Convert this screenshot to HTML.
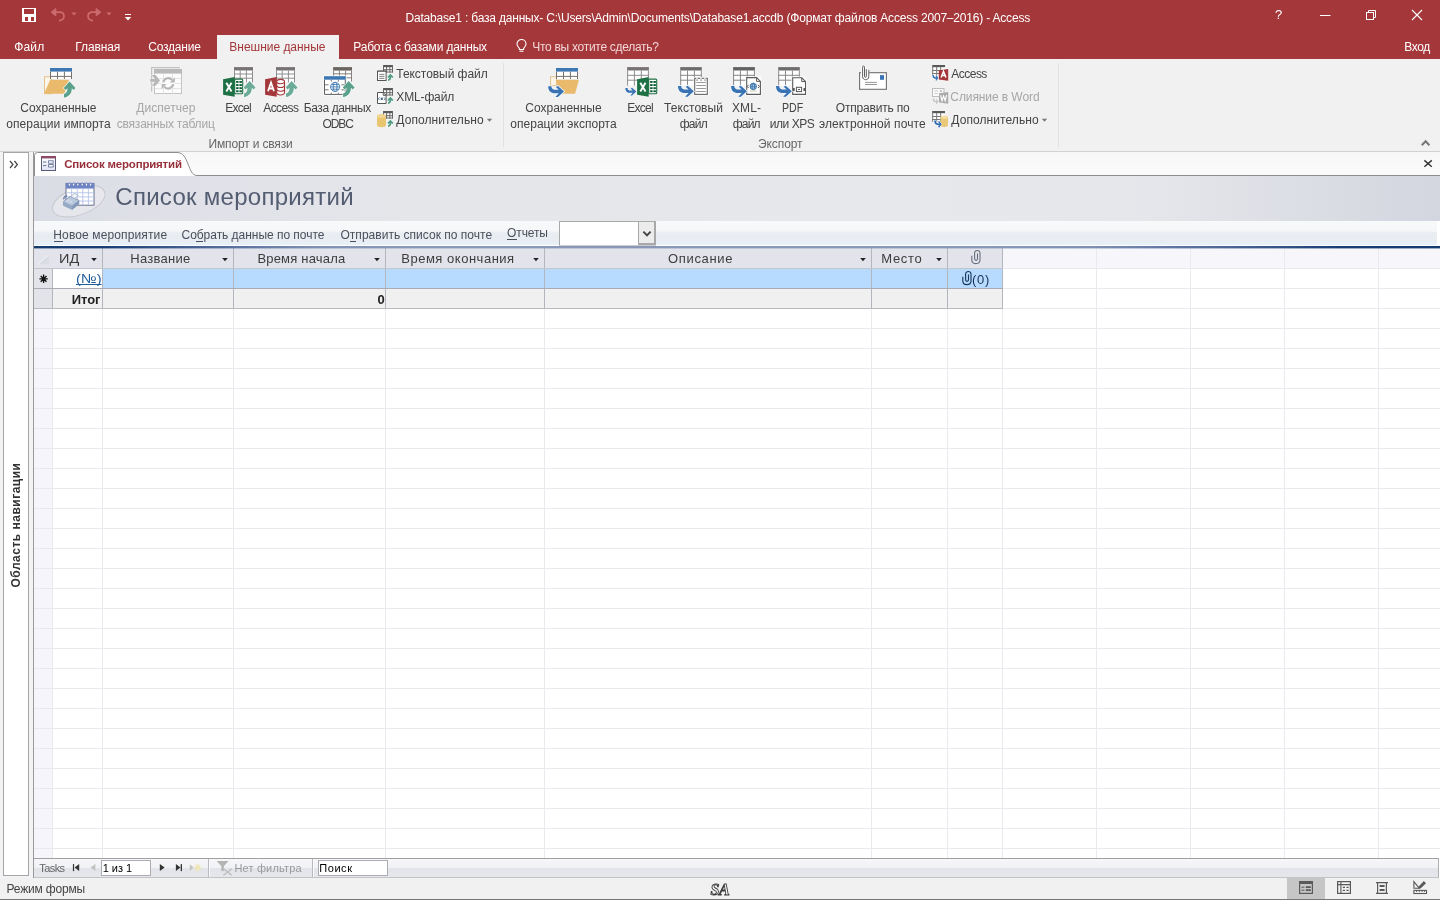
<!DOCTYPE html>
<html lang="ru">
<head>
<meta charset="utf-8">
<title>Database1 : база данных - Access</title>
<style>
*{box-sizing:border-box;margin:0;padding:0}
html,body{width:1440px;height:900px;overflow:hidden;background:#fff}
body{font-family:"Liberation Sans",sans-serif;font-size:12px;color:#444;position:relative}
#app{position:absolute;left:0;top:0;width:1440px;height:900px;will-change:transform}
.t{position:absolute;white-space:pre;line-height:20px;height:20px}
.a{position:absolute}
svg{position:absolute;overflow:visible}
#titlebar{left:0;top:0;width:1440px;height:59px;background:#a4373a}
#acttab{left:217px;top:35px;width:122px;height:24px;background:#f1f1f1}
#ribbon{left:0;top:59px;width:1440px;height:93px;background:#f1f1f1;border-bottom:1px solid #d2d2d2}
.sep{position:absolute;top:63px;width:1px;height:84px;background:#e2e2e2}
#work{left:0;top:152px;width:1440px;height:726px;background:#f3f3f5}
#nav{left:3px;top:152px;width:26px;height:724px;background:#fff;border:1px solid #a6a6a6}
#navtxt{left:-46px;top:515.5px;letter-spacing:0.5px;width:123px;height:20px;transform:rotate(-90deg);transform-origin:center;font-weight:700;font-size:12px;color:#333;white-space:pre;line-height:20px;text-align:center}
#doc{left:33px;top:152px;width:1407px;height:726px;background:#fff;border-left:1px solid #9a9a9a}
#tabrow{left:34px;top:152px;width:1406px;height:24px;background:linear-gradient(#f7f7f7,#fbfbfb)}
#fhead{left:34px;top:176px;width:1406px;height:45px;background:linear-gradient(90deg,#dadce5 0%,#e0e1e8 10%,#e5e6ea 26%,#e7e8eb 60%,#e6e7eb 78%,#dcdee5 90%,#d3d6df 100%)}
#abar{left:34px;top:221px;width:1403px;height:25px;background:linear-gradient(#f8f9fa 0%,#f5f7f9 40%,#e9ecf1 48%,#e8edf3 80%,#e6f0f8 94%,#fff 98%)}
#bline{left:34px;top:246px;width:1406px;height:2px;background:linear-gradient(90deg,#143c6e 0%,#173f73 5%,#4a6596 12%,#8090b4 20%,#8b97b9 26%,#8b97b9 68%,#8090b4 75%,#4a6596 85%,#173f73 93%,#143c6e 100%)}
#bline2{left:34px;top:248px;width:1406px;height:1px;opacity:.4;z-index:3;background:linear-gradient(90deg,#143c6e 0%,#173f73 5%,#4a6596 12%,#8090b4 20%,#8b97b9 26%,#8b97b9 68%,#8090b4 75%,#4a6596 85%,#173f73 93%,#143c6e 100%)}
#chead{left:34px;top:248px;width:968px;height:20px;background:#e3e4eb}
#cheadx{left:1003px;top:248px;width:437px;height:20px;background:#f6f6fb}
#selcol{left:34px;top:308px;width:18px;height:550px;background:#f5f5fb}
#newrow{left:103px;top:269px;width:899px;height:19px;background:#b7dbff}
#totrow{left:34px;top:289px;width:968px;height:19px;background:#f0f0f0}
.vl{position:absolute;width:1px}
.hl{position:absolute;height:1px}
#navbar{left:34px;top:858px;width:1405px;height:20px;border-right:1px solid #b0b0b0;background:linear-gradient(#f6f6f9 0%,#f1f2f5 48%,#e3e4e9 52%,#e6e7ec 100%);border-top:1px solid #a0a0a0;border-bottom:1px solid #c4c4c4}
.box{position:absolute;background:#fff;border:1px solid #abadb3}
#status{left:0;top:878px;width:1440px;height:22px;background:#f1f1f1;border-bottom:1px solid #777}
#vsel{left:1287px;top:878px;width:38px;height:21px;background:#c6c6c6}
</style>
</head>
<body>
<div id="app">
<div class="a" id="titlebar"></div><div class="a" id="acttab"></div>
<span class="t" style="left:405.5px;top:7.5px;font-size:12px;color:#fff;letter-spacing:-0.193px;">Database1 : база данных- C:\Users\Admin\Documents\Database1.accdb (Формат файлов Access 2007–2016) - Access</span>
<span class="t" style="left:14.3px;top:37.0px;font-size:12px;color:#fff;letter-spacing:0.133px;">Файл</span>
<span class="t" style="left:75.3px;top:37.0px;font-size:12px;color:#fff;letter-spacing:-0.1px;">Главная</span>
<span class="t" style="left:148.2px;top:37.0px;font-size:12px;color:#fff;letter-spacing:-0.2px;">Создание</span>
<span class="t" style="left:229.3px;top:37.0px;font-size:12px;color:#a4373a;letter-spacing:-0.023px;">Внешние данные</span>
<span class="t" style="left:353.2px;top:37.0px;font-size:12px;color:#fff;letter-spacing:-0.167px;">Работа с базами данных</span>
<span class="t" style="left:532.3px;top:37.0px;font-size:12px;color:#f3d6d7;letter-spacing:-0.286px;">Что вы хотите сделать?</span>
<span class="t" style="left:1404.3px;top:37.0px;font-size:12px;color:#fff;letter-spacing:-0.433px;">Вход</span>
<div class="a" id="ribbon"></div>
<div class="sep" style="left:503px"></div><div class="sep" style="left:1058px"></div>
<span class="t" style="left:20.3px;top:98.0px;font-size:12px;color:#444;letter-spacing:-0.03px;">Сохраненные</span>
<span class="t" style="left:6.3px;top:114.0px;font-size:12px;color:#444;letter-spacing:0.067px;">операции импорта</span>
<span class="t" style="left:136.3px;top:98.0px;font-size:12px;color:#a6a6a6;letter-spacing:0.05px;">Диспетчер</span>
<span class="t" style="left:116.7px;top:114.0px;font-size:12px;color:#a6a6a6;letter-spacing:-0.2px;">связанных таблиц</span>
<span class="t" style="left:225.3px;top:98.0px;font-size:12px;color:#444;letter-spacing:-0.75px;">Excel</span>
<span class="t" style="left:263.3px;top:98.0px;font-size:12px;color:#444;letter-spacing:-0.6px;">Access</span>
<span class="t" style="left:303.7px;top:98.0px;font-size:12px;color:#444;letter-spacing:-0.39px;">База данных</span>
<span class="t" style="left:322.5px;top:114.0px;font-size:12px;color:#444;letter-spacing:-1.067px;">ODBC</span>
<span class="t" style="left:396.3px;top:64.0px;font-size:12px;color:#444;letter-spacing:-0.046px;">Текстовый файл</span>
<span class="t" style="left:396.3px;top:87.0px;font-size:12px;color:#444;letter-spacing:-0.143px;">XML-файл</span>
<span class="t" style="left:396.3px;top:110.0px;font-size:12px;color:#444;letter-spacing:0.083px;">Дополнительно</span>
<span class="t" style="left:208.5px;top:133.5px;font-size:12px;color:#666;letter-spacing:-0.154px;">Импорт и связи</span>
<span class="t" style="left:525.3px;top:98.0px;font-size:12px;color:#444;letter-spacing:-0.01px;">Сохраненные</span>
<span class="t" style="left:510.3px;top:114.0px;font-size:12px;color:#444;letter-spacing:0.025px;">операции экспорта</span>
<span class="t" style="left:627.3px;top:98.0px;font-size:12px;color:#444;letter-spacing:-0.75px;">Excel</span>
<span class="t" style="left:664.0px;top:98.0px;font-size:12px;color:#444;letter-spacing:0.062px;">Текстовый</span>
<span class="t" style="left:679.7px;top:114.0px;font-size:12px;color:#444;letter-spacing:-0.733px;">файл</span>
<span class="t" style="left:732.0px;top:98.0px;font-size:12px;color:#444;letter-spacing:0.1px;">XML-</span>
<span class="t" style="left:732.8px;top:114.0px;font-size:12px;color:#444;letter-spacing:-0.833px;">файл</span>
<span class="t" style="left:781.6px;top:98.0px;font-size:12px;color:#444;transform:scaleX(0.883);transform-origin:0 0;">PDF</span>
<span class="t" style="left:769.8px;top:114.0px;font-size:12px;color:#444;letter-spacing:-0.467px;">или XPS</span>
<span class="t" style="left:835.8px;top:98.0px;font-size:12px;color:#444;letter-spacing:-0.191px;">Отправить по</span>
<span class="t" style="left:819.0px;top:114.0px;font-size:12px;color:#444;letter-spacing:0.112px;">электронной почте</span>
<span class="t" style="left:951.3px;top:64.0px;font-size:12px;color:#444;letter-spacing:-0.52px;">Access</span>
<span class="t" style="left:950.3px;top:87.0px;font-size:12px;color:#a6a6a6;letter-spacing:-0.085px;">Слияние в Word</span>
<span class="t" style="left:951.3px;top:110.0px;font-size:12px;color:#444;letter-spacing:0.083px;">Дополнительно</span>
<span class="t" style="left:758.0px;top:133.5px;font-size:12px;color:#666;letter-spacing:-0.083px;">Экспорт</span>
<svg style="left:22px;top:8px" width="14" height="14" viewBox="0 0 14 14"><rect width="14" height="14" fill="#fff"/><rect x="2" y="1" width="10" height="5" fill="#a4373a"/><rect x="3" y="9" width="3" height="4" fill="#a4373a"/><rect x="9" y="9" width="3" height="4" fill="#a4373a"/></svg><svg style="left:50px;top:7px" width="17" height="16" viewBox="0 0 17 16"><path d="M2.2 5.2H9.5C12.5 5.2 14 7 14 9.2C14 11.6 12.2 13 9.6 13.6" fill="none" stroke="#cc6b6f" stroke-width="1.7" stroke-linecap="round"/><path d="M5.8 1.4L1.2 5.2L5.8 9Z" fill="#cc6b6f" stroke="#cc6b6f" stroke-width="1" stroke-linejoin="round"/></svg><svg style="left:85px;top:7px" width="17" height="16" viewBox="0 0 17 16"><path d="M14.8 5.2H7.5C4.5 5.2 3 7 3 9.2C3 11.6 4.8 13 7.4 13.6" fill="none" stroke="#cc6b6f" stroke-width="1.7" stroke-linecap="round"/><path d="M11.2 1.4L15.8 5.2L11.2 9Z" fill="#cc6b6f" stroke="#cc6b6f" stroke-width="1" stroke-linejoin="round"/></svg><svg style="left:71px;top:12px" width="6" height="4" viewBox="0 0 6 4"><path d="M0.5 0.5H5.5L3 3.5Z" fill="#cc6b6f"/></svg><svg style="left:106px;top:12px" width="6" height="4" viewBox="0 0 6 4"><path d="M0.5 0.5H5.5L3 3.5Z" fill="#cc6b6f"/></svg><svg style="left:124px;top:13px" width="8" height="8" viewBox="0 0 8 8"><rect x="1" y="1" width="6" height="1" fill="#fff"/><path d="M0.8 4H7.2L4 7.5Z" fill="#fff"/></svg><svg style="left:515px;top:38px" width="13" height="16" viewBox="0 0 13 16"><path d="M6.5 1.5C3.9 1.5 2 3.5 2 5.9C2 7.6 3 8.6 3.8 9.6C4.3 10.2 4.5 10.8 4.5 11.5H8.5C8.5 10.8 8.7 10.2 9.2 9.6C10 8.6 11 7.6 11 5.9C11 3.5 9.1 1.5 6.5 1.5Z" fill="none" stroke="#fff" stroke-width="1.1"/><path d="M4.5 13.2H8.5" stroke="#fff" stroke-width="1.1"/></svg><span class="t" style="left:1275px;top:5px;font-size:13px;color:#fff;">?</span><svg style="left:1320px;top:10px" width="11" height="11" viewBox="0 0 11 11"><rect x="0" y="5" width="10.5" height="1" fill="#fff"/></svg><svg style="left:1365px;top:9px" width="12" height="12" viewBox="0 0 12 12"><path d="M3.5 3.5V1.5H10.5V8.5H8.5" fill="none" stroke="#fff" stroke-width="1"/><rect x="1.5" y="3.5" width="7" height="7" fill="none" stroke="#fff" stroke-width="1"/></svg><svg style="left:1411px;top:9px" width="12" height="12" viewBox="0 0 12 12"><path d="M1 1L11 11M11 1L1 11" stroke="#fff" stroke-width="1.1"/></svg>
<svg style="left:43px;top:66px" width="34" height="32" viewBox="0 0 34 32"><rect x="1.5" y="10.7" width="7" height="17" fill="#fdf5e8" stroke="#e4c391" stroke-width="1"/><rect x="7" y="2" width="22" height="11" fill="#fff"/><rect x="7" y="2" width="22" height="3.6" fill="#3e78b4"/><path d="M7.5 5.6V13M28.5 5.6V13M14.5 5.6V13M21.4 5.6V13M7 10.4H29" stroke="#77716c" stroke-width="1" fill="none"/><path d="M7.2 13.8H25.9L21.4 27.8H1Z" fill="#e9ba6c"/><path transform="translate(21 15.6)" d="M5.6 0L11.5 6.4L9.6 8.4L7.8 6.6C7.9 11.6 5 15.2 0 15.9L0 12.3C2.7 11.7 3.5 9.6 3.4 6.6L1.6 8.4L-0.3 6.4Z" fill="#5aa08b" stroke="#f4fbf8" stroke-width="1.2" paint-order="stroke"/></svg><svg style="left:150px;top:66px" width="33" height="30" viewBox="0 0 33 30"><path d="M1.6 25.6V1.6H29.8" fill="none" stroke="#c2c2c2" stroke-width="1.2"/><rect x="4.5" y="3.5" width="27" height="24" fill="#fcfcfc" stroke="#c4c4c4" stroke-width="1"/><rect x="4" y="3.1" width="27.9" height="4.5" fill="#bab8ba"/><path d="M5 12.6H31M5 17.6H31M5 22.6H31M13.5 8V27.5M22.5 8V27.5" stroke="#e3e3e3" stroke-width="1"/><path d="M1.8 9L5.6 9L10 14.4L5.6 19.8H1.8L5 15.8H0.2V13H5Z" fill="#b7b7b7" stroke="#f5f5f5" stroke-width="1" paint-order="stroke"/><circle cx="18.2" cy="17.3" r="6.6" fill="#fcfcfc"/><path d="M13.2 16.4A5.1 5.1 0 0 1 22.2 14" fill="none" stroke="#b7b7b7" stroke-width="2.2"/><path d="M24.8 11.6V16.6H19.8Z" fill="#b7b7b7"/><path d="M23.2 18.2A5.1 5.1 0 0 1 14.2 20.6" fill="none" stroke="#b7b7b7" stroke-width="2.2"/><path d="M11.6 23V18H16.6Z" fill="#b7b7b7"/></svg><svg style="left:222px;top:66px" width="34" height="32" viewBox="0 0 34 32"><rect x="12" y="1.1" width="19" height="15.299999999999999" fill="#fff"/><rect x="12" y="1.1" width="19" height="3.4" fill="#777374"/><path d="M12.5 4.5V16.4M30.5 4.5V16.4M18.2 4.5V16.4M24.4 4.5V16.4M12 8H31M12 12.2H31" stroke="#8e8c8c" stroke-width="1" fill="none"/><rect x="12.7" y="13.1" width="8" height="14.7" rx="1" fill="#fff" stroke="#1e7145" stroke-width="1.1"/><rect x="14.1" y="15.0" width="2.5" height="1.9" fill="#0f5e35"/><rect x="17.4" y="15.0" width="2.5" height="1.9" fill="#0f5e35"/><rect x="14.1" y="18.1" width="2.5" height="1.9" fill="#0f5e35"/><rect x="17.4" y="18.1" width="2.5" height="1.9" fill="#0f5e35"/><rect x="14.1" y="21.2" width="2.5" height="1.9" fill="#0f5e35"/><rect x="17.4" y="21.2" width="2.5" height="1.9" fill="#0f5e35"/><rect x="14.1" y="24.3" width="2.5" height="1.9" fill="#0f5e35"/><rect x="17.4" y="24.3" width="2.5" height="1.9" fill="#0f5e35"/><path d="M1.1 13.3L12.7 11.1V30.700000000000003L1.1 28.700000000000003Z" fill="#1e7145"/><path d="M4.300000000000001 16.7L9.5 25.5M9.5 16.7L4.300000000000001 25.5" stroke="#fff" stroke-width="1.9"/><path transform="translate(22 15.1)" d="M5.6 0L11.5 6.4L9.6 8.4L7.8 6.6C7.9 11.6 5 15.2 0 15.9L0 12.3C2.7 11.7 3.5 9.6 3.4 6.6L1.6 8.4L-0.3 6.4Z" fill="#6dab99" stroke="#f4fbf8" stroke-width="1.2" paint-order="stroke"/></svg><svg style="left:264px;top:66px" width="34" height="32" viewBox="0 0 34 32"><rect x="12" y="1.1" width="19" height="15.299999999999999" fill="#fff"/><rect x="12" y="1.1" width="19" height="3.4" fill="#777374"/><path d="M12.5 4.5V16.4M30.5 4.5V16.4M18.2 4.5V16.4M24.4 4.5V16.4M12 8H31M12 12.2H31" stroke="#8e8c8c" stroke-width="1" fill="none"/><path d="M12.7 15.6V26.6C12.7 29.700000000000003 20.5 29.700000000000003 20.5 26.6V15.6" fill="#fff" stroke="#a4373a" stroke-width="1.1"/><ellipse cx="16.6" cy="15.6" rx="3.9" ry="2.2" fill="#fff" stroke="#a4373a" stroke-width="1.1"/><path d="M12.7 19.299999999999997C12.7 22.299999999999997 20.5 22.299999999999997 20.5 19.299999999999997" fill="none" stroke="#a4373a" stroke-width="1.1"/><path d="M12.7 23.0C12.7 26.0 20.5 26.0 20.5 23.0" fill="none" stroke="#a4373a" stroke-width="1.1"/><path d="M1.1 13.3L12.7 11.1V30.700000000000003L1.1 28.700000000000003Z" fill="#a4373a"/><path d="M4.0 25.299999999999997L7.0 16.5L10.0 25.299999999999997M5.1 22.5H8.9" stroke="#fff" stroke-width="1.8" fill="none"/><path transform="translate(22 15.1)" d="M5.6 0L11.5 6.4L9.6 8.4L7.8 6.6C7.9 11.6 5 15.2 0 15.9L0 12.3C2.7 11.7 3.5 9.6 3.4 6.6L1.6 8.4L-0.3 6.4Z" fill="#6dab99" stroke="#f4fbf8" stroke-width="1.2" paint-order="stroke"/></svg><svg style="left:323px;top:66px" width="34" height="32" viewBox="0 0 34 32"><rect x="10.1" y="1.1" width="18.9" height="14.5" fill="#fff"/><rect x="10.1" y="1.1" width="18.9" height="3.5" fill="#6a6560"/><path d="M10.6 4.6V15.6M28.5 4.6V15.6M16.4 4.6V15.6M22.6 4.6V15.6M10.1 7.8H29M10.1 11.8H29" stroke="#85817c" stroke-width="1" fill="none"/><rect x="0.3" y="9.5" width="23.2" height="20.1" fill="#f8fbfe"/><rect x="1" y="10.2" width="21.8" height="18.7" fill="#fff"/><rect x="1" y="10.2" width="21.8" height="3.5" fill="#3e78b4"/><path d="M1.5 13.7V28.4H22.3V13.7" fill="none" stroke="#5f5f5f" stroke-width="1"/><path d="M8.3 13.7V15.6M15.3 13.7V15.6M8.3 26.6V28.4M15.3 26.6V28.4M2 18.8H5.6M2 23.8H5.6M18.4 18.8H22M18.4 23.8H22" stroke="#7a7a7a" stroke-width="1"/><circle cx="12.1" cy="20.9" r="4.6" fill="#fff" stroke="#3f78b0" stroke-width="0.9"/><ellipse cx="12.1" cy="20.9" rx="1.9319999999999997" ry="4.6" fill="none" stroke="#3f78b0" stroke-width="0.9"/><path d="M7.5 20.9H16.7M8.19 18.599999999999998H16.009999999999998M8.19 23.2H16.009999999999998" stroke="#3f78b0" stroke-width="0.9"/><path transform="translate(20.1 15.1)" d="M5.6 0L11.5 6.4L9.6 8.4L7.8 6.6C7.9 11.6 5 15.2 0 15.9L0 12.3C2.7 11.7 3.5 9.6 3.4 6.6L1.6 8.4L-0.3 6.4Z" fill="#5aa08b" stroke="#f4fbf8" stroke-width="1.2" paint-order="stroke"/></svg><svg style="left:377px;top:65px" width="17" height="17" viewBox="0 0 17 17"><rect x="6" y="0" width="10" height="7.5" fill="#fff"/><rect x="6" y="0" width="10" height="2.2" fill="#595959"/><path d="M6.5 0V7.5M15.5 0V7.5M6 7.0H16M6 4.7H16M9.6 2V7.5M12.9 2V7.5" stroke="#666" stroke-width="1" fill="none"/><rect x="0.5" y="6.1" width="8.6" height="9.4" fill="#fff" stroke="#555" stroke-width="1"/><path d="M2 5.2V7M4 5.2V7M6 5.2V7M8 5.2V7" stroke="#555" stroke-width=".9"/><path d="M2.2 9.4H7.4M2.2 11.4H7.4M2.2 13.4H7.4" stroke="#777" stroke-width=".9"/><path transform="translate(10.6 8.7)" d="M2.8 0L5.9 3.4L4.7 4.4L3.7 3.4C3.8 5.6 2.6 7 0.4 7.3L0.4 5.6C1.6 5.3 1.9 4.5 1.9 3.4L0.9 4.4L-0.3 3.4Z" fill="#4f9a84" stroke="#f4fbf8" stroke-width=".8" paint-order="stroke"/></svg><svg style="left:377px;top:88px" width="17" height="17" viewBox="0 0 17 17"><rect x="6" y="0" width="10" height="7.5" fill="#fff"/><rect x="6" y="0" width="10" height="2.2" fill="#595959"/><path d="M6.5 0V7.5M15.5 0V7.5M6 7.0H16M6 4.7H16M9.6 2V7.5M12.9 2V7.5" stroke="#666" stroke-width="1" fill="none"/><path d="M0.5 4.5H6.2L9.1 7.4V15.5H0.5Z" fill="#fff" stroke="#555" stroke-width="1"/><path d="M6.2 4.5V7.4H9.1" fill="none" stroke="#555" stroke-width=".9"/><path d="M2.6 9.4L1.4 10.8L2.6 12.2M7 9.4L8.2 10.8L7 12.2" fill="none" stroke="#4a6a8c" stroke-width=".9"/><rect x="3.7" y="9.7" width="2.2" height="2.2" fill="#4a6a8c"/><path transform="translate(10.6 8.7)" d="M2.8 0L5.9 3.4L4.7 4.4L3.7 3.4C3.8 5.6 2.6 7 0.4 7.3L0.4 5.6C1.6 5.3 1.9 4.5 1.9 3.4L0.9 4.4L-0.3 3.4Z" fill="#4f9a84" stroke="#f4fbf8" stroke-width=".8" paint-order="stroke"/></svg><svg style="left:377px;top:111px" width="17" height="17" viewBox="0 0 17 17"><rect x="6" y="0" width="10" height="7.5" fill="#fff"/><rect x="6" y="0" width="10" height="2.2" fill="#595959"/><path d="M6.5 0V7.5M15.5 0V7.5M6 7.0H16M6 4.7H16M9.6 2V7.5M12.9 2V7.5" stroke="#666" stroke-width="1" fill="none"/><path d="M0 5V14C0 17 9 17 9 14V5Z" fill="#e8c56e"/><ellipse cx="4.5" cy="5" rx="4.5" ry="2" fill="#f0d58e"/><path transform="translate(10.6 8.7)" d="M2.8 0L5.9 3.4L4.7 4.4L3.7 3.4C3.8 5.6 2.6 7 0.4 7.3L0.4 5.6C1.6 5.3 1.9 4.5 1.9 3.4L0.9 4.4L-0.3 3.4Z" fill="#4f9a84" stroke="#f4fbf8" stroke-width=".8" paint-order="stroke"/></svg><svg style="left:547px;top:66px" width="34" height="32" viewBox="0 0 34 32"><rect x="3.5" y="10.7" width="6" height="9" fill="#fdf5e8" stroke="#e4c391" stroke-width="1"/><rect x="9" y="2" width="22" height="11" fill="#fff"/><rect x="9" y="2" width="22" height="3.6" fill="#3e78b4"/><path d="M9.5 5.6V13M30.5 5.6V13M16.5 5.6V13M23.4 5.6V13M9 10.4H31" stroke="#77716c" stroke-width="1" fill="none"/><path d="M8.6 13.8H31.9L28.1 27.8H12.5Z" fill="#e9ba6c"/><path transform="translate(1.2 20.2) scale(1)" d="M0 0H3.2C3.2 2.6 5 3.6 8 3.6H10.6L7.7 0.8L9.7-0.2L15.8 5.3L9.7 10.8H7.2L10.6 7.1H7C2.5 7.1 0 4.5 0 0Z" fill="#3a73b4" stroke="#eef5fc" stroke-width="1.6" paint-order="stroke"/></svg><svg style="left:624px;top:66px" width="34" height="32" viewBox="0 0 34 32"><rect x="3.1" y="1.1" width="21.799999999999997" height="18.5" fill="#fff"/><rect x="3.1" y="1.1" width="21.799999999999997" height="3.4" fill="#777374"/><path d="M3.6 4.5V19.6M24.4 4.5V19.6M10.4 4.5V19.6M17.3 4.5V19.6M3.1 9.3H24.9M3.1 14.2H24.9" stroke="#8e8c8c" stroke-width="1" fill="none"/><rect x="24.7" y="13.1" width="8" height="14.7" rx="1" fill="#fff" stroke="#1e7145" stroke-width="1.1"/><rect x="26.1" y="15.0" width="2.5" height="1.9" fill="#0f5e35"/><rect x="29.400000000000002" y="15.0" width="2.5" height="1.9" fill="#0f5e35"/><rect x="26.1" y="18.1" width="2.5" height="1.9" fill="#0f5e35"/><rect x="29.400000000000002" y="18.1" width="2.5" height="1.9" fill="#0f5e35"/><rect x="26.1" y="21.2" width="2.5" height="1.9" fill="#0f5e35"/><rect x="29.400000000000002" y="21.2" width="2.5" height="1.9" fill="#0f5e35"/><rect x="26.1" y="24.3" width="2.5" height="1.9" fill="#0f5e35"/><rect x="29.400000000000002" y="24.3" width="2.5" height="1.9" fill="#0f5e35"/><path d="M13.1 13.3L24.7 11.1V30.700000000000003L13.1 28.700000000000003Z" fill="#1e7145"/><path d="M16.3 16.7L21.5 25.5M21.5 16.7L16.3 25.5" stroke="#fff" stroke-width="1.9"/><path transform="translate(1.3 21.9) scale(0.7)" d="M0 0H3.2C3.2 2.6 5 3.6 8 3.6H10.6L7.7 0.8L9.7-0.2L15.8 5.3L9.7 10.8H7.2L10.6 7.1H7C2.5 7.1 0 4.5 0 0Z" fill="#3a73b4" stroke="#eef5fc" stroke-width="1.6" paint-order="stroke"/></svg><svg style="left:677px;top:66px" width="34" height="32" viewBox="0 0 34 32"><rect x="3.2" y="1.1" width="21.6" height="18.5" fill="#fff"/><rect x="3.2" y="1.1" width="21.6" height="3.4" fill="#6f6c6c"/><path d="M3.7 4.5V19.6M24.3 4.5V19.6M10.5 4.5V19.6M17.4 4.5V19.6M3.2 9.3H24.8M3.2 14.2H24.8" stroke="#8a8888" stroke-width="1" fill="none"/><rect x="16.4" y="11" width="15.2" height="18.6" fill="#fafafa"/><rect x="17.7" y="12.3" width="12.6" height="16.1" fill="#fff" stroke="#666" stroke-width="1.1"/><circle cx="20" cy="12.1" r="1" fill="#f1f1f1"/><circle cx="24" cy="12.1" r="1" fill="#f1f1f1"/><circle cx="28" cy="12.1" r="1" fill="#f1f1f1"/><rect x="19.4" y="13.4" width="1.4" height="1.4" fill="#8a8a8a"/><rect x="23.4" y="13.4" width="1.4" height="1.4" fill="#8a8a8a"/><rect x="27.4" y="13.4" width="1.4" height="1.4" fill="#8a8a8a"/><path d="M19.3 16.5H28.8M19.3 19.5H28.8M19.3 22.5H28.8M19.3 25.5H28.8" stroke="#999" stroke-width="1"/><path transform="translate(1 20) scale(1)" d="M0 0H3.2C3.2 2.6 5 3.6 8 3.6H10.6L7.7 0.8L9.7-0.2L15.8 5.3L9.7 10.8H7.2L10.6 7.1H7C2.5 7.1 0 4.5 0 0Z" fill="#3a73b4" stroke="#eef5fc" stroke-width="1.6" paint-order="stroke"/></svg><svg style="left:730px;top:66px" width="34" height="32" viewBox="0 0 34 32"><rect x="3.1" y="1.1" width="21.799999999999997" height="18.5" fill="#fff"/><rect x="3.1" y="1.1" width="21.799999999999997" height="3.4" fill="#636060"/><path d="M3.6 4.5V19.6M24.4 4.5V19.6M10.4 4.5V19.6M17.3 4.5V19.6M3.1 9.3H24.9M3.1 14.2H24.9" stroke="#868484" stroke-width="1" fill="none"/><rect x="15.4" y="10.3" width="16.3" height="19.4" fill="#fafafa"/><path d="M16.7 11.6H26.599999999999998L30.4 15.399999999999999V28.4H16.7Z" fill="#fff" stroke="#5c5c5c" stroke-width="1.1"/><path d="M26.599999999999998 11.6V15.399999999999999H30.4" fill="none" stroke="#5c5c5c" stroke-width="1"/><circle cx="23.3" cy="20.4" r="3.2" fill="#fff" stroke="#3f78b0" stroke-width="1"/><ellipse cx="23.3" cy="20.4" rx="1.344" ry="3.2" fill="none" stroke="#3f78b0" stroke-width="1"/><path d="M20.1 20.4H26.5M20.580000000000002 18.799999999999997H26.02M20.580000000000002 22.0H26.02" stroke="#3f78b0" stroke-width="1"/><path d="M18.6 18.8L17.2 20.4L18.6 22M28 18.8L29.4 20.4L28 22" fill="none" stroke="#555" stroke-width="1"/><path d="M20 25H26.5" stroke="#b8b890" stroke-width=".8"/><path transform="translate(1.1 20) scale(1)" d="M0 0H3.2C3.2 2.6 5 3.6 8 3.6H10.6L7.7 0.8L9.7-0.2L15.8 5.3L9.7 10.8H7.2L10.6 7.1H7C2.5 7.1 0 4.5 0 0Z" fill="#3a73b4" stroke="#eef5fc" stroke-width="1.6" paint-order="stroke"/></svg><svg style="left:775px;top:66px" width="34" height="32" viewBox="0 0 34 32"><rect x="3.2" y="1.1" width="21.6" height="18.5" fill="#fff"/><rect x="3.2" y="1.1" width="21.6" height="3.4" fill="#6f6c6c"/><path d="M3.7 4.5V19.6M24.3 4.5V19.6M10.5 4.5V19.6M17.4 4.5V19.6M3.2 9.3H24.8M3.2 14.2H24.8" stroke="#8a8888" stroke-width="1" fill="none"/><rect x="16.4" y="10.5" width="15.4" height="19.2" fill="#fafafa"/><path d="M17.7 11.8H26.7L30.5 15.600000000000001V28.4H17.7Z" fill="#fff" stroke="#5c5c5c" stroke-width="1.1"/><path d="M26.7 11.8V15.600000000000001H30.5" fill="none" stroke="#5c5c5c" stroke-width="1"/><rect x="21.4" y="21.3" width="5.2" height="4.3" fill="#fff" stroke="#555" stroke-width="1"/><path d="M23 23.5H25" stroke="#555" stroke-width="1"/><rect x="18" y="22" width="1.7" height="3" fill="#555"/><rect x="28.5" y="22" width="1.9" height="3" fill="#555"/><path transform="translate(1 20) scale(1)" d="M0 0H3.2C3.2 2.6 5 3.6 8 3.6H10.6L7.7 0.8L9.7-0.2L15.8 5.3L9.7 10.8H7.2L10.6 7.1H7C2.5 7.1 0 4.5 0 0Z" fill="#3a73b4" stroke="#eef5fc" stroke-width="1.6" paint-order="stroke"/></svg><svg style="left:858px;top:64px" width="30" height="27" viewBox="0 0 30 27"><rect x="1.6" y="8.7" width="26.8" height="16.6" fill="#fff" stroke="#707070" stroke-width="1.1"/><rect x="22" y="11.1" width="4" height="4.7" fill="#3a75b5"/><path d="M7.1 18.4H18.9M7.1 20.5H18.9" stroke="#8a8a8a" stroke-width=".9"/><path d="M10.4 4.6V12.3C10.4 14.2 8.6 14.2 8.6 12.3V5.6C8.6 4 6.4 4 6.4 5.6V12.8C6.4 16.6 11.6 16.6 11.6 12.8V5.2" transform="translate(-1.9 -0.6) scale(1.0)" fill="none" stroke="#fff" stroke-width="3"/><path d="M8.1 4.8V11.9C8.1 13.6 6.3 13.6 6.3 11.9V3.6C6.3 0.9 4.4 0.9 4.4 3.6V12.4C4.4 16.4 10.6 16.4 10.6 12.4V5.4" transform="translate(0.2 0.3)" fill="none" stroke="#5e5e5e" stroke-width="1"/></svg><svg style="left:932px;top:65px" width="17" height="17" viewBox="0 0 17 17"><rect x="0.2" y="0" width="12.8" height="11" fill="#fff"/><rect x="0.2" y="0" width="12.8" height="2.2" fill="#595959"/><path d="M0.7 0V11M4.7 2V11M8.7 2V11M0.2 5.5H13M0.2 8.5H13" stroke="#777" stroke-width="1" fill="none"/><path d="M6.8 5.3L16.2 4V15.7L6.8 14.4Z" fill="#a4373a"/><path d="M9.1 12.6L11.5 6.4L13.9 12.6M10 10.5H13" stroke="#fff" stroke-width="1.5" fill="none"/><path transform="translate(0.4 10) scale(1)" d="M0 0H1.4C1.4 1.6 2.2 2.3 3.4 2.3H4.2L3 1L3.9 0.3L6 3L3.9 5.7L3 5L4.2 3.7H3.2C1 3.7 0 2.4 0 0Z" fill="#2f6db3" stroke="#f3f8fd" stroke-width=".8" paint-order="stroke"/></svg><svg style="left:932px;top:88px" width="17" height="17" viewBox="0 0 17 17"><rect x="0.5" y="0.5" width="11.5" height="8" fill="#fafafa" stroke="#bdbdbd" stroke-width="1"/><path d="M2.4 3H6M2.4 5.5H6" stroke="#cfcfcf" stroke-width="1"/><rect x="8" y="2" width="2" height="2" fill="#c4c4c4"/><path d="M7 5.3L16.2 4V15.7L7 14.4Z" fill="#ababab"/><path d="M8.6 7.2L10 12.6L11.6 8L13.2 12.6L14.6 7.2" stroke="#fff" stroke-width="1.2" fill="none"/><path transform="translate(0.6 10.6) scale(1)" d="M0 0H1.4C1.4 1.6 2.2 2.3 3.4 2.3H4.2L3 1L3.9 0.3L6 3L3.9 5.7L3 5L4.2 3.7H3.2C1 3.7 0 2.4 0 0Z" fill="#c2c2c2" stroke="#f3f8fd" stroke-width=".8" paint-order="stroke"/></svg><svg style="left:932px;top:111px" width="17" height="17" viewBox="0 0 17 17"><rect x="0.2" y="0" width="12.8" height="11" fill="#fff"/><rect x="0.2" y="0" width="12.8" height="2.2" fill="#595959"/><path d="M0.7 0V11M4.7 2V11M8.7 2V11M0.2 5.5H13M0.2 8.5H13" stroke="#777" stroke-width="1" fill="none"/><path d="M8.4 6.2V14.2C8.4 16.6 16 16.6 16 14.2V6.2Z" fill="#ebc878"/><ellipse cx="12.2" cy="6.2" rx="3.8" ry="1.7" fill="#f3dca0"/><path transform="translate(2.2 9.6) scale(1.25)" d="M0 0H1.4C1.4 1.6 2.2 2.3 3.4 2.3H4.2L3 1L3.9 0.3L6 3L3.9 5.7L3 5L4.2 3.7H3.2C1 3.7 0 2.4 0 0Z" fill="#2f6db3" stroke="#f3f8fd" stroke-width=".8" paint-order="stroke"/></svg><svg style="left:486px;top:118px" width="7" height="5" viewBox="0 0 7 5"><path d="M0.8 0.8H6.2L3.5 3.8Z" fill="#777"/></svg><svg style="left:1041px;top:118px" width="7" height="5" viewBox="0 0 7 5"><path d="M0.8 0.8H6.2L3.5 3.8Z" fill="#777"/></svg><svg style="left:1420px;top:139px" width="11" height="8" viewBox="0 0 11 8"><path d="M1.8 6.2L5.6 2.2L9.4 6.2" fill="none" stroke="#777" stroke-width="2"/></svg>
<div class="a" id="work"></div><div class="a" id="nav"></div>
<div class="a" id="navtxt">Область навигации</div>
<div class="a" id="doc"></div><div class="a" id="tabrow"></div>
<svg style="left:0;top:0" width="1440" height="180" viewBox="0 0 1440 180"><path d="M34.5 176V155.5Q34.5 152.5 37.5 152.5H177C183.5 152.5 185.5 158 188 164C190.5 170 192 175.5 197 175.5H1440V176Z" fill="#fff"/><path d="M34.5 176V155.5Q34.5 152.5 37.5 152.5H177C183.5 152.5 185.5 158 188 164C190.5 170 192 175.5 197 175.5H1440" fill="none" stroke="#8e8e8e" stroke-width="1"/></svg><svg style="left:41px;top:156px" width="15" height="15" viewBox="0 0 15 15"><defs><linearGradient id="tg" x1="0" y1="0" x2="0" y2="1"><stop offset="0" stop-color="#fff"/><stop offset="1" stop-color="#dfe3f2"/></linearGradient></defs><rect x="0.5" y="0.5" width="14" height="14" fill="url(#tg)" stroke="#5b5d78" stroke-width="1"/><rect x="0" y="0" width="15" height="2.4" fill="#8d4a66"/><path d="M2 6H5.4M2 9.6H5.4" stroke="#5a6890" stroke-width=".9"/><rect x="7.6" y="4.8" width="4.6" height="2.4" fill="#fff" stroke="#5a6890" stroke-width=".8"/><rect x="7.6" y="8.6" width="4.6" height="2.4" fill="#fff" stroke="#5a6890" stroke-width=".8"/></svg><svg style="left:1423px;top:159px" width="11" height="9" viewBox="0 0 11 9"><path d="M1.4 1.4L8.8 7.8M8.8 1.4L1.4 7.8" stroke="#333" stroke-width="1.4"/></svg><svg style="left:9px;top:160px" width="10" height="9" viewBox="0 0 10 9"><path d="M1 1L4 4.5L1 8M5.4 1L8.4 4.5L5.4 8" fill="none" stroke="#444" stroke-width="1.2"/></svg>
<span class="t" style="left:64.2px;top:154.2px;font-size:11.5px;color:#96303a;font-weight:700;letter-spacing:-0.2px;">Список мероприятий</span>
<div class="a" id="fhead"></div>
<svg style="left:0;top:0" width="140" height="222" viewBox="0 0 140 222"><ellipse cx="78.8" cy="201.2" rx="27.5" ry="13.5" transform="rotate(-20 78.8 201.2)" fill="#e9eaee" fill-opacity=".75" stroke="#c6c8d0" stroke-width="1"/><rect x="66" y="183.4" width="28" height="21.8" fill="#fff" stroke="#66738f" stroke-width="1"/><rect x="66" y="183.2" width="28" height="5.4" fill="#6f86cb"/><ellipse cx="69.4" cy="184.6" rx="1" ry="1.7" fill="#fff" stroke="#4d5f9a" stroke-width=".6"/><ellipse cx="73.65" cy="184.6" rx="1" ry="1.7" fill="#fff" stroke="#4d5f9a" stroke-width=".6"/><ellipse cx="77.9" cy="184.6" rx="1" ry="1.7" fill="#fff" stroke="#4d5f9a" stroke-width=".6"/><ellipse cx="82.15" cy="184.6" rx="1" ry="1.7" fill="#fff" stroke="#4d5f9a" stroke-width=".6"/><ellipse cx="86.4" cy="184.6" rx="1" ry="1.7" fill="#fff" stroke="#4d5f9a" stroke-width=".6"/><ellipse cx="90.65" cy="184.6" rx="1" ry="1.7" fill="#fff" stroke="#4d5f9a" stroke-width=".6"/><path d="M71.6 188.6V205M77.2 188.6V205M82.8 188.6V205M88.4 188.6V205M66 192.75H94M66 196.9H94M66 201.04999999999998H94" stroke="#b4c2e8" stroke-width="0.9"/><path d="M63.6 201.5L70 196.4L78.8 200.2V204L72.2 209.4L63.6 205.4Z" fill="#b9c8dc" stroke="#7f92b0" stroke-width=".8"/><path d="M63.6 201.5L72.2 205.4V209.4L63.6 205.4Z" fill="#97abc8"/><path d="M72.2 205.4L78.8 200.2V204L72.2 209.4Z" fill="#8399b9"/><path d="M70.6 196.4L74.6 193.6L78.4 195.4L74.6 198.4Z" fill="#f4f6fa" stroke="#8a9bb8" stroke-width=".6"/><path d="M66 201.4L68.6 199.4M67.8 202.2L70.4 200.2M69.6 203L72.2 201" stroke="#e8eef6" stroke-width=".8"/><path d="M64 199.4C63 198 65.4 195.6 67.2 196.2" fill="none" stroke="#7389ab" stroke-width="1.6"/></svg>
<span class="t" style="left:115.3px;top:187.0px;font-size:24px;color:#535c70;letter-spacing:0.276px;">Список мероприятий</span>
<div class="a" id="abar"></div>
<span class="t" style="left:53.3px;top:224.5px;font-size:12px;color:#4a4f5c;letter-spacing:0.125px;">Новое мероприятие</span>
<span class="t" style="left:181.5px;top:224.5px;font-size:12px;color:#4a4f5c;letter-spacing:-0.032px;">Собрать данные по почте</span>
<span class="t" style="left:340.5px;top:224.5px;font-size:12px;color:#4a4f5c;letter-spacing:0.021px;">Отправить список по почте</span>
<span class="t" style="left:507.0px;top:222.5px;font-size:12px;color:#4a4f5c;letter-spacing:-0.1px;">Отчеты</span>
<div class="hl" style="left:54px;top:241px;width:9px;background:#4a4f5c"></div><div class="hl" style="left:196px;top:241px;width:7px;background:#4a4f5c"></div><div class="hl" style="left:350px;top:241px;width:6px;background:#4a4f5c"></div><div class="hl" style="left:507px;top:239px;width:10px;background:#4a4f5c"></div>
<div class="box" style="left:559px;top:221px;width:97px;height:25px;border-color:#a8a8a8 #c9ccd2 #c9ccd2 #a8a8a8"></div>
<div class="a" style="left:638px;top:221px;width:18px;height:24px;background:#ececec;border:1px solid #a9a9a9;border-width:1px 2px 2px 1px"></div><svg style="left:642px;top:230px" width="10" height="8" viewBox="0 0 10 8"><path d="M1.4 1.6L5 5.4L8.6 1.6" fill="none" stroke="#444" stroke-width="2"/></svg>
<div class="a" id="bline"></div><div class="a" id="bline2"></div>
<div class="a" id="chead"></div><div class="a" id="cheadx"></div><div class="a" id="selcol"></div>
<div class="a" id="newrow"></div><div class="a" id="totrow"></div>
<div class="a" style="left:34px;top:268px;width:18px;height:40px;background:#e3e4ea"></div>
<div class="vl" style="left:52px;top:308px;height:550px;background:#e9e9ee"></div>
<div class="vl" style="left:102px;top:308px;height:550px;background:#e9e9ee"></div>
<div class="vl" style="left:233px;top:308px;height:550px;background:#e9e9ee"></div>
<div class="vl" style="left:385px;top:308px;height:550px;background:#e9e9ee"></div>
<div class="vl" style="left:544px;top:308px;height:550px;background:#e9e9ee"></div>
<div class="vl" style="left:871px;top:308px;height:550px;background:#e9e9ee"></div>
<div class="vl" style="left:947px;top:308px;height:550px;background:#e9e9ee"></div>
<div class="vl" style="left:1002px;top:308px;height:550px;background:#e9e9ee"></div>
<div class="vl" style="left:1096px;top:308px;height:550px;background:#e9e9ee"></div>
<div class="vl" style="left:1190px;top:308px;height:550px;background:#e9e9ee"></div>
<div class="vl" style="left:1284px;top:308px;height:550px;background:#e9e9ee"></div>
<div class="vl" style="left:1378px;top:308px;height:550px;background:#e9e9ee"></div>
<div class="vl" style="left:1096px;top:249px;height:59px;background:#e9e9ee"></div>
<div class="vl" style="left:1190px;top:249px;height:59px;background:#e9e9ee"></div>
<div class="vl" style="left:1284px;top:249px;height:59px;background:#e9e9ee"></div>
<div class="vl" style="left:1378px;top:249px;height:59px;background:#e9e9ee"></div>
<div class="hl" style="left:34px;top:328px;width:1406px;background:#e9e9ee"></div>
<div class="hl" style="left:34px;top:348px;width:1406px;background:#e9e9ee"></div>
<div class="hl" style="left:34px;top:368px;width:1406px;background:#e9e9ee"></div>
<div class="hl" style="left:34px;top:388px;width:1406px;background:#e9e9ee"></div>
<div class="hl" style="left:34px;top:408px;width:1406px;background:#e9e9ee"></div>
<div class="hl" style="left:34px;top:428px;width:1406px;background:#e9e9ee"></div>
<div class="hl" style="left:34px;top:448px;width:1406px;background:#e9e9ee"></div>
<div class="hl" style="left:34px;top:468px;width:1406px;background:#e9e9ee"></div>
<div class="hl" style="left:34px;top:488px;width:1406px;background:#e9e9ee"></div>
<div class="hl" style="left:34px;top:508px;width:1406px;background:#e9e9ee"></div>
<div class="hl" style="left:34px;top:528px;width:1406px;background:#e9e9ee"></div>
<div class="hl" style="left:34px;top:548px;width:1406px;background:#e9e9ee"></div>
<div class="hl" style="left:34px;top:568px;width:1406px;background:#e9e9ee"></div>
<div class="hl" style="left:34px;top:588px;width:1406px;background:#e9e9ee"></div>
<div class="hl" style="left:34px;top:608px;width:1406px;background:#e9e9ee"></div>
<div class="hl" style="left:34px;top:628px;width:1406px;background:#e9e9ee"></div>
<div class="hl" style="left:34px;top:648px;width:1406px;background:#e9e9ee"></div>
<div class="hl" style="left:34px;top:668px;width:1406px;background:#e9e9ee"></div>
<div class="hl" style="left:34px;top:688px;width:1406px;background:#e9e9ee"></div>
<div class="hl" style="left:34px;top:708px;width:1406px;background:#e9e9ee"></div>
<div class="hl" style="left:34px;top:728px;width:1406px;background:#e9e9ee"></div>
<div class="hl" style="left:34px;top:748px;width:1406px;background:#e9e9ee"></div>
<div class="hl" style="left:34px;top:768px;width:1406px;background:#e9e9ee"></div>
<div class="hl" style="left:34px;top:788px;width:1406px;background:#e9e9ee"></div>
<div class="hl" style="left:34px;top:808px;width:1406px;background:#e9e9ee"></div>
<div class="hl" style="left:34px;top:828px;width:1406px;background:#e9e9ee"></div>
<div class="hl" style="left:34px;top:848px;width:1406px;background:#e9e9ee"></div>
<div class="hl" style="left:1003px;top:268px;width:437px;background:#e9e9ee"></div>
<div class="hl" style="left:1003px;top:288px;width:437px;background:#e9e9ee"></div>
<div class="hl" style="left:1003px;top:308px;width:437px;background:#e9e9ee"></div>
<div class="vl" style="left:52px;top:268px;height:40px;background:#b4b6bd"></div>
<div class="vl" style="left:102px;top:248px;height:60px;background:#b4b6bd"></div>
<div class="vl" style="left:233px;top:248px;height:60px;background:#b4b6bd"></div>
<div class="vl" style="left:385px;top:248px;height:60px;background:#b4b6bd"></div>
<div class="vl" style="left:544px;top:248px;height:60px;background:#b4b6bd"></div>
<div class="vl" style="left:871px;top:248px;height:60px;background:#b4b6bd"></div>
<div class="vl" style="left:947px;top:248px;height:60px;background:#b4b6bd"></div>
<div class="vl" style="left:1002px;top:248px;height:60px;background:#b4b6bd"></div>
<div class="hl" style="left:34px;top:288px;width:18px;background:#b4b6bd"></div>
<div class="hl" style="left:34px;top:268px;width:969px;background:#c3c5cc"></div>
<div class="hl" style="left:34px;top:288px;width:969px;background:#a9abb2"></div>
<div class="hl" style="left:34px;top:308px;width:969px;background:#b9bac0"></div>
<span class="t" style="left:59.4px;top:248.5px;font-size:13px;color:#3c3c3c;transform:scaleX(1.112);transform-origin:0 0;">ИД</span>
<span class="t" style="left:130.3px;top:248.5px;font-size:13px;color:#3c3c3c;letter-spacing:0.257px;">Название</span>
<span class="t" style="left:257.4px;top:248.5px;font-size:13px;color:#3c3c3c;letter-spacing:0.191px;">Время начала</span>
<span class="t" style="left:401.2px;top:248.5px;font-size:13px;color:#3c3c3c;letter-spacing:0.521px;">Время окончания</span>
<span class="t" style="left:668.0px;top:248.5px;font-size:13px;color:#3c3c3c;letter-spacing:0.657px;">Описание</span>
<span class="t" style="left:881.3px;top:248.5px;font-size:13px;color:#3c3c3c;letter-spacing:0.675px;">Место</span>
<span class="t" style="left:75.6px;top:269.0px;font-size:13px;color:#1f5c99;transform:scaleX(1.133);transform-origin:0 0;text-decoration:underline;text-decoration-skip-ink:none;">(№)</span>
<span class="t" style="left:71.8px;top:289.5px;font-size:13px;color:#222;font-weight:700;letter-spacing:-0.1px;">Итог</span>
<span class="t" style="left:377.4px;top:289.5px;font-size:13px;color:#222;font-weight:700;letter-spacing:-0.5px;">0</span>
<span class="t" style="left:972.0px;top:270.0px;font-size:13px;color:#1a3050;letter-spacing:0.7px;">(0)</span>
<svg style="left:89.5px;top:257px" width="8" height="5" viewBox="0 0 8 5"><path d="M1.2 0.9H6.8L4 4.3Z" fill="#222"/></svg><svg style="left:220.5px;top:257px" width="8" height="5" viewBox="0 0 8 5"><path d="M1.2 0.9H6.8L4 4.3Z" fill="#222"/></svg><svg style="left:372.5px;top:257px" width="8" height="5" viewBox="0 0 8 5"><path d="M1.2 0.9H6.8L4 4.3Z" fill="#222"/></svg><svg style="left:531.5px;top:257px" width="8" height="5" viewBox="0 0 8 5"><path d="M1.2 0.9H6.8L4 4.3Z" fill="#222"/></svg><svg style="left:858.5px;top:257px" width="8" height="5" viewBox="0 0 8 5"><path d="M1.2 0.9H6.8L4 4.3Z" fill="#222"/></svg><svg style="left:934.5px;top:257px" width="8" height="5" viewBox="0 0 8 5"><path d="M1.2 0.9H6.8L4 4.3Z" fill="#222"/></svg><svg style="left:37px;top:254px" width="13" height="11" viewBox="0 0 13 11"><path d="M11.8 0.8V10.2H0.8Z" fill="#dadce4"/><path d="M11.8 0.8L0.8 10.2" stroke="#f4f5f9" stroke-width="1"/></svg><svg style="left:39px;top:274px" width="10" height="10" viewBox="0 0 10 10"><path d="M4.6 0.6V9M0.4 4.8H8.8M1.7 1.9L7.5 7.7M7.5 1.9L1.7 7.7" stroke="#111" stroke-width="1.35"/></svg><svg style="left:971px;top:250px" width="10" height="15" viewBox="0 0 10 15"><path d="M0.8 5.8V10C0.8 14.8 9 14.8 9 10V3.2C9 -0.4 3.6 -0.4 3.6 3.2V8.8C3.6 10.9 6.5 10.9 6.5 8.8V3.6" fill="none" stroke="#626a78" stroke-width="1.05"/></svg><svg style="left:962px;top:271px" width="10" height="15" viewBox="0 0 10 15"><path d="M0.8 5.8V10C0.8 14.8 9 14.8 9 10V3.2C9 -0.4 3.6 -0.4 3.6 3.2V8.8C3.6 10.9 6.5 10.9 6.5 8.8V3.6" fill="none" stroke="#1a3a5c" stroke-width="1.15"/></svg>
<div class="a" id="navbar"></div>
<div class="box" style="left:101px;top:860px;width:50px;height:16px"></div>
<div class="box" style="left:318px;top:860px;width:70px;height:16px"></div>
<div class="vl" style="left:208px;top:859px;height:18px;background:#b8b9be"></div><div class="vl" style="left:209px;top:859px;height:18px;background:#fafafa"></div>
<div class="vl" style="left:312px;top:859px;height:18px;background:#b8b9be"></div><div class="vl" style="left:313px;top:859px;height:18px;background:#fafafa"></div>
<span class="t" style="left:39.2px;top:858.0px;font-size:11px;color:#666;letter-spacing:-0.55px;">Tasks</span>
<span class="t" style="left:102.7px;top:858.0px;font-size:11px;color:#000;letter-spacing:-0.0px;">1 из 1</span>
<span class="t" style="left:234.5px;top:858.0px;font-size:11px;color:#999;letter-spacing:0.15px;">Нет фильтра</span>
<span class="t" style="left:319.3px;top:858.0px;font-size:11px;color:#000;letter-spacing:0.55px;">Поиск</span>
<svg style="left:72px;top:863px" width="8" height="9" viewBox="0 0 8 9"><rect x="0.9" y="1.1" width="1.2" height="7" fill="#333"/><path d="M7.2 1.1V8.1L2.6 4.6Z" fill="#333"/></svg><svg style="left:90px;top:863px" width="6" height="9" viewBox="0 0 6 9"><path d="M5.4 1.1V8.1L0.6 4.6Z" fill="#c2c2c2"/></svg><svg style="left:159px;top:863px" width="6" height="9" viewBox="0 0 6 9"><path d="M0.8 1.1V8.1L5.6 4.6Z" fill="#333"/></svg><svg style="left:175px;top:863px" width="8" height="9" viewBox="0 0 8 9"><path d="M0.9 1.1V8.1L5.5 4.6Z" fill="#333"/><rect x="5.7" y="1.1" width="1.3" height="7" fill="#333"/></svg><svg style="left:189px;top:863px" width="14" height="9" viewBox="0 0 14 9"><path d="M0.8 1.3V7.9L4.6 4.6Z" fill="#c4c4c4"/><path d="M8.6 0.8V8.4M4.8 4.6H12.4M6 2L11.2 7.2M11.2 2L6 7.2" stroke="#efe6b8" stroke-width="1.3"/></svg><svg style="left:216px;top:860px" width="18" height="17" viewBox="0 0 18 17"><path d="M0.6 1H12.6L7.8 6.2V10.6H5.4V6.2Z" fill="#b4b4b4"/><path d="M5.4 10.6H7.8" stroke="#b4b4b4" stroke-width="1"/><path d="M7.4 8.8L15.8 15.2M15.8 8.8L7.4 15.2" stroke="#bdbdbd" stroke-width="1.4"/></svg>
<div class="a" id="status"></div><div class="a" id="vsel"></div>
<span class="t" style="left:6.5px;top:878.5px;font-size:12px;color:#444;letter-spacing:-0.18px;">Режим формы</span>
<svg style="left:1299px;top:881px" width="14" height="13" viewBox="0 0 14 13"><rect x="0.6" y="0.6" width="12.8" height="11.8" fill="none" stroke="#5a5a5a" stroke-width="1.2"/><rect x="0" y="0" width="14" height="3" fill="#5a5a5a"/><path d="M2.4 6.2H5.4M2.4 9.2H5.4" stroke="#5a5a5a" stroke-width="1"/><path d="M6.8 6.2H11.8M6.8 9.2H11.8" stroke="#5a5a5a" stroke-width="1.8"/></svg><svg style="left:1337px;top:881px" width="14" height="13" viewBox="0 0 14 13"><rect x="0.6" y="0.6" width="12.8" height="11.8" fill="none" stroke="#5a5a5a" stroke-width="1.2"/><path d="M3.9 0.6V12.4M0.6 3.6H13.4" stroke="#5a5a5a" stroke-width="1.1"/><path d="M5.8 6.4H8M9.4 6.4H11.6M5.8 9.4H8M9.4 9.4H11.6" stroke="#5a5a5a" stroke-width="1.1"/></svg><svg style="left:1376px;top:882px" width="12" height="12" viewBox="0 0 12 12"><path d="M0 0.6H12M0 11.4H12M1.6 0.6V11.4M10.4 0.6V11.4" stroke="#5a5a5a" stroke-width="1.2" fill="none"/><path d="M3.6 4H8.6M3.6 8H8.6" stroke="#5a5a5a" stroke-width="1.8"/></svg><svg style="left:1413px;top:880px" width="14" height="14" viewBox="0 0 14 14"><path d="M0.9 1.6V8.2H6.2Z" fill="none" stroke="#5a5a5a" stroke-width="1.1"/><path d="M5.2 8.6L5.9 6.3L10.9 1.1L13 3.2L7.8 8.2Z" fill="#5a5a5a"/><rect x="0.9" y="10.4" width="12.6" height="3.1" fill="none" stroke="#5a5a5a" stroke-width="1.1"/><path d="M3.6 10.4V12M6.4 10.4V12M9.2 10.4V12M11.6 10.4V12" stroke="#5a5a5a" stroke-width=".9"/></svg><span class="t" style="left:710.5px;top:879px;font-family:'Liberation Serif',serif;font-style:italic;font-weight:700;font-size:16px;letter-spacing:-0.5px;color:#fafafa;-webkit-text-stroke:0.9px #3c3c3c;line-height:22px;height:22px">SA</span>
</div>
</body>
</html>
